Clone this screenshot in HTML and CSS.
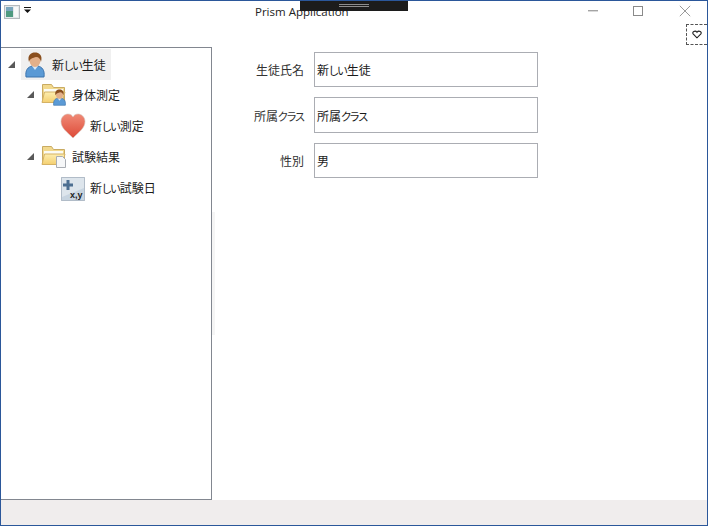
FILE: index.html
```html
<!DOCTYPE html>
<html lang="ja">
<head>
<meta charset="utf-8">
<title>Prism Application</title>
<link rel="stylesheet" href="styles.css">
</head>
<body>
<div class="window">
  <div class="drag-handle"><span class="grip"></span></div>
  <header class="titlebar">
    <div class="sys">
      <svg class="appicon" width="16" height="14" viewBox="0 0 16 14"><rect x=".5" y=".5" width="15" height="13" fill="#e4e8ea" stroke="#b4b9bd"/><rect x="2" y="2" width="7" height="10" fill="#4f9a80"/><rect x="2" y="2" width="7" height="4" fill="#7aa6bd"/><rect x="10" y="2" width="4" height="10" fill="#f7f8f8"/></svg>
      <svg class="qat" width="8" height="7" viewBox="0 0 8 7"><rect x="0" y="0" width="7" height="1" fill="#111"/><path d="M0 2.500h7L3.500 6z" fill="#111"/></svg>
    </div>
    <div class="title">Prism Application</div>
    <div class="caps">
      <svg class="cap" width="12" height="12" viewBox="0 0 12 12"><rect x="1" y="5" width="10" height="1.400" fill="#a4a4a4"/></svg>
      <svg class="cap" width="12" height="12" viewBox="0 0 12 12"><rect x="1.500" y="1.500" width="9" height="9" fill="none" stroke="#8a8a8a"/></svg>
      <svg class="cap close" width="12" height="12" viewBox="0 0 12 12"><path d="M.8.8l10.400 10.400M11.200.8L.8 11.200" stroke="#9a9a9a" fill="none"/></svg>
    </div>
  </header>
  <div class="fav-row">
    <div class="fav"><svg width="10" height="9" viewBox="0 0 9 8"><path d="M4.500 7L1 3.500C-.2 1.800 2.800-.2 4.500 2 6.200-.2 9.200 1.800 8 3.500z" fill="none" stroke="#222"/></svg></div>
  </div>
  <main class="content">
    <nav class="tree">
      <div class="node n0">
        <span class="arrow"></span>
        <div class="selected">
          <svg class="ico" width="20" height="26" viewBox="0 0 20 26"><use href="#person"/></svg>
          <span>新<span class="kana">しい</span>生徒</span>
        </div>
      </div>
      <div class="node n1 r-a">
        <span class="arrow"></span>
        <svg class="ico" width="26" height="23" viewBox="0 0 26 23">
          <use href="#folder"/>
          <svg x="12" y="6" width="13" height="17" viewBox="0 0 20 26"><use href="#person"/></svg>
        </svg>
        <span>身体測定</span>
      </div>
      <div class="node n2 r-b">
        <svg class="ico" width="26" height="26" viewBox="0 0 26 26"><defs><linearGradient id="hg" x1="0" y1="0" x2="0" y2="1"><stop offset="0" stop-color="#f08a76"/><stop offset="1" stop-color="#dd4a38"/></linearGradient></defs><path d="M13 25C7 19 1 15 1 8.500 1 3.500 5 1 8 1c2.500 0 4 1.200 5 3 1-1.800 2.500-3 5-3 3 0 7 2.500 7 7.500C25 15 19 19 13 25z" fill="url(#hg)" stroke="#d5c4bc" stroke-width=".6"/></svg>
        <span>新<span class="kana">しい</span>測定</span>
      </div>
      <div class="node n1 r-c">
        <span class="arrow"></span>
        <svg class="ico" width="26" height="23" viewBox="0 0 26 23">
          <use href="#folder"/>
          <path d="M15.500 11.500h6l3 3v8h-9z" fill="#f6f7f8" stroke="#a9adb3"/>
        </svg>
        <span>試験結果</span>
      </div>
      <div class="node n2 r-d">
        <svg class="ico" width="24" height="24" viewBox="0 0 24 24"><rect x=".5" y=".5" width="23" height="23" fill="#c7d4e0" stroke="#7f8fa0" stroke-dasharray="1 1"/><path d="M1 1h22v10L1 20z" fill="#dde5ec"/><path d="M7 3v10M2 8h10" stroke="#4d6f91" stroke-width="3"/><text x="9" y="21" class="xytext">x,y</text></svg>
        <span>新<span class="kana">しい</span>試験日</span>
      </div>
    </nav>
    <div class="splitter"></div>
    <form class="form">
      <label class="lbl">生徒氏名</label><div class="field"><span>新<span class="kana">しい</span>生徒</span></div>
      <label class="lbl">所属<span class="kana">クラス</span></label><div class="field"><span>所属<span class="kana">クラス</span></span></div>
      <label class="lbl">性別</label><div class="field">男</div>
    </form>
  </main>
  <footer class="status"></footer>
</div>
<svg class="defs" width="0" height="0">
  <defs>
    <linearGradient id="fg" x1="0" y1="0" x2="0" y2="1"><stop offset="0" stop-color="#fdeeb0"/><stop offset="1" stop-color="#f4cf70"/></linearGradient>
    <g id="folder">
      <path d="M1.500 1.500h9l2 3h11v15h-22z" fill="#f2d98e" stroke="#c9ab62"/>
      <path d="M3 6h19v3H3z" fill="#fbfbf4"/>
      <path d="M1 19.500L3.500 9h20.500l-3 10.500z" fill="url(#fg)" stroke="#d5b265"/>
    </g>
    <g id="person">
      <path d="M1 25c-1-7 2-10 6-11h6c4 1 7 4 6 11z" fill="#5b9ad5" stroke="#3d74ad"/>
      <path d="M7 14l3 4 3-4z" fill="#d7e8f6"/>
      <ellipse cx="10" cy="8" rx="5.500" ry="7" fill="#e3b08a"/>
      <path d="M4 10C2 3 6 .5 10 .5s8 2.500 6 9.500c-.5-3-2-5-5-5-3 1-6 1-7 5z" fill="#8a4f1e"/>
    </g>
  </defs>
</svg>
</body>
</html>
```
FILE: styles.css
```css
html, body { margin: 0; padding: 0; }
body {
  font-family: "Noto Sans CJK JP", "Noto Sans", sans-serif;
  font-feature-settings: "palt";
  font-size: 12px;
  color: #1a1a1a;
  background: #fff;
}
.kana { font-size: 11px; letter-spacing: -1px; }
.defs { position: absolute; }
.window {
  position: relative;
  box-sizing: border-box;
  width: 708px;
  height: 526px;
  border: 1px solid #2b579a;
  display: flex;
  flex-direction: column;
  background: #fff;
  overflow: hidden;
}
.drag-handle {
  position: absolute;
  left: 299px;
  top: -1px;
  width: 108px;
  height: 11px;
  background: #1c1c1c;
  display: flex;
  justify-content: center;
  padding-top: 4px;
  box-sizing: border-box;
}
.grip {
  display: block;
  width: 30px;
  height: 3px;
  border-top: 1px solid #8d8d8d;
  border-bottom: 1px solid #8d8d8d;
  box-sizing: border-box;
}
.titlebar {
  height: 21px;
  display: flex;
  align-items: flex-start;
  flex: none;
}
.sys { width: 254px; display: flex; align-items: flex-start; padding: 4px 0 0 3px; box-sizing: border-box; gap: 4px; flex: none; }
.qat { margin-top: 2px; }
.title {
  font-family: "Open Sans", "Noto Sans", sans-serif;
  font-size: 11.500px;
  line-height: 22px;
  color: #222;
  white-space: nowrap;
  width: 332px;
  flex: none;
}
.caps { display: flex; gap: 33px; padding-top: 4px; }
.close { margin-left: 2px; }
.fav-row { height: 25px; flex: none; display: flex; justify-content: flex-end; align-items: flex-start; }
.fav {
  width: 21px;
  height: 21px;
  box-sizing: border-box;
  border: 1px dashed #555;
  border-right: 0;
  display: flex;
  align-items: center;
  justify-content: center;
  margin-top: 2px;
}
.content { flex: 1; display: flex; min-height: 0; }
.tree {
  width: 211px;
  box-sizing: border-box;
  border: 1px solid #828790;
  border-left: 0;
  flex: none;
  display: flex;
  flex-direction: column;
}
.splitter {
  flex: none;
  width: 3px;
  height: 123px;
  margin-top: 165px;
  background: #f5f5f5;
}
.node { display: flex; align-items: center; white-space: nowrap; }
.arrow {
  width: 0;
  height: 0;
  flex: none;
  border-left: 7px solid transparent;
  border-bottom: 7px solid #595959;
}
.n0 { height: 31px; padding-left: 7px; margin-top: 1px; }
.n0 .arrow { margin-right: 6px; }
.selected {
  display: flex;
  align-items: center;
  width: 90px;
  height: 31px;
  background: #f0f0f0;
  padding-left: 4px;
  box-sizing: border-box;
}
.selected .ico { margin-right: 7px; }
.n1 { padding-left: 26px; }
.n1 .arrow { margin-right: 7px; }
.n1 .ico { margin-right: 5px; }
.n2 { padding-left: 59px; }
.n2 .ico { margin-right: 4px; }
.r-a { height: 29px; }
.r-b { height: 33px; }
.r-c { height: 28px; }
.r-d { height: 34px; padding-left: 60px; }
.r-d .ico { margin: 3px 5px 0 0; }
.xytext { font-family: "Liberation Sans", sans-serif; font-size: 9px; font-weight: 700; fill: #222; }
.form {
  flex: 1;
  display: grid;
  grid-template-columns: 89px 224px;
  grid-template-rows: 35px 36px 35px;
  row-gap: 10px;
  column-gap: 10px;
  align-content: start;
  align-items: center;
  padding-top: 5px;
  box-sizing: border-box;
}
.lbl { text-align: right; white-space: nowrap; color: #333; }
.field {
  box-sizing: border-box;
  height: 100%;
  border: 1px solid #abadb3;
  display: flex;
  align-items: center;
  padding-left: 2px;
}
.status { height: 25px; background: #f0eded; flex: none; }
```
